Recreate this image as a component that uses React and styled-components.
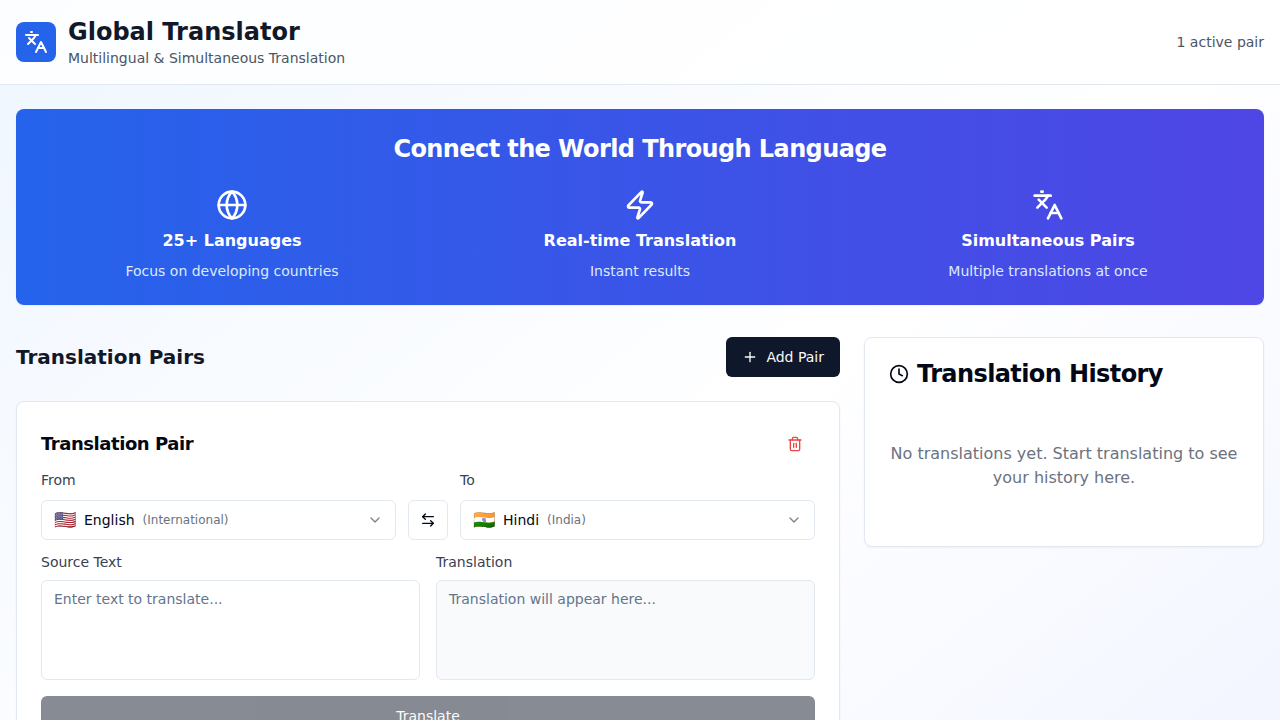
import React from "react";
import styled, { createGlobalStyle } from "styled-components";
import { Languages, Globe, Zap, Plus, Clock, Trash2, ArrowLeftRight, ChevronDown } from "lucide-react";

const GlobalStyle = createGlobalStyle`
  *, *::before, *::after { box-sizing: border-box; }
  html { font-family: "DejaVu Sans", sans-serif; line-height: 1.5; }
  body { margin: 0; height: 100vh; overflow: hidden; color: #020817; }
  h1, h2, h3, p { margin: 0; }
  button, textarea { font: inherit; }
  svg { display: block; flex-shrink: 0; }
`;

const Page = styled.div`
  min-height: 1000px;
  background: linear-gradient(to bottom right, #eff6ff, #ffffff, #eef2ff);
`;

const Header = styled.header`
  display: flex;
  align-items: center;
  justify-content: space-between;
  height: 85px;
  padding: 0 16px;
  background: rgba(255, 255, 255, 0.8);
  border-bottom: 1px solid #e2e8f0;
`;

const Brand = styled.div`
  display: flex;
  align-items: center;
  gap: 12px;
`;

const Logo = styled.div`
  display: grid;
  place-items: center;
  width: 40px;
  height: 40px;
  border-radius: 8px;
  color: #fff;
  background: #2563eb;
`;

const AppName = styled.h1`
  font-size: 24px;
  line-height: 32px;
  font-weight: 700;
  color: #111827;
`;

const Muted = styled.p`
  font-size: 14px;
  line-height: 20px;
  color: #4b5563;
`;

const Main = styled.main`
  padding: 24px 16px;
`;

const Hero = styled.section`
  height: 196px;
  padding: 24px;
  margin-bottom: 32px;
  border-radius: 8px;
  color: #fff;
  text-align: center;
  background: linear-gradient(to right, #2563eb, #4f46e5);
  box-shadow: 0 1px 2px rgba(0, 0, 0, 0.05);
`;

const HeroTitle = styled.h2`
  font-size: 24px;
  line-height: 32px;
  font-weight: 600;
  letter-spacing: -0.6px;
`;

const Features = styled.div`
  display: grid;
  grid-template-columns: repeat(3, 1fr);
  gap: 24px;
  margin-top: 24px;
`;

const Feature = styled.div`
  display: flex;
  flex-direction: column;
  align-items: center;
`;

const FeatureName = styled.h3`
  margin-top: 8px;
  font-size: 16px;
  line-height: 24px;
  font-weight: 600;
`;

const FeatureText = styled.p`
  margin-top: 8px;
  font-size: 14px;
  line-height: 20px;
  color: #dbeafe;
`;

const Columns = styled.div`
  display: grid;
  grid-template-columns: 824px 1fr;
  gap: 24px;
  align-items: start;
`;

const SectionHead = styled.div`
  display: flex;
  align-items: center;
  justify-content: space-between;
  margin-bottom: 24px;
`;

const SectionTitle = styled.h2`
  font-size: 20px;
  line-height: 28px;
  font-weight: 600;
  color: #111827;
`;

const AddButton = styled.button`
  display: flex;
  align-items: center;
  gap: 8px;
  height: 40px;
  padding: 0 16px;
  border: 0;
  border-radius: 6px;
  font-size: 14px;
  color: #f8fafc;
  background: #0f172a;
`;

const Card = styled.section`
  border: 1px solid #e2e8f0;
  border-radius: 8px;
  background: #fff;
  box-shadow: 0 1px 2px rgba(0, 0, 0, 0.05);
`;

const PairCard = styled(Card)`
  padding: 24px;
`;

const PairHead = styled.div`
  display: flex;
  align-items: center;
  justify-content: space-between;
  height: 36px;
  margin-bottom: 8px;
`;

const PairTitle = styled.h3`
  font-size: 18px;
  line-height: 28px;
  font-weight: 600;
  letter-spacing: -0.45px;
`;

const DeleteButton = styled.button`
  display: grid;
  place-items: center;
  width: 40px;
  height: 36px;
  padding: 0;
  border: 0;
  color: #ef4444;
  background: transparent;
`;

const LanguageRow = styled.div`
  display: grid;
  grid-template-columns: 1fr 40px 1fr;
  gap: 12px;
  align-items: end;
`;

const Label = styled.label`
  display: block;
  margin-bottom: ${({ $gap }) => $gap || 8}px;
  font-size: 14px;
  line-height: 20px;
  color: #374151;
`;

const Select = styled.div`
  display: flex;
  align-items: center;
  gap: 8px;
  height: 40px;
  padding: 0 12px;
  border: 1px solid #e2e8f0;
  border-radius: 6px;
  font-size: 14px;
  background: #fff;
  & > svg { margin-left: auto; opacity: 0.5; }
`;

const Flag = styled.span`
  font-size: 18px;
  line-height: 28px;
`;

const Region = styled.span`
  font-size: 12px;
  color: #6b7280;
`;

const SwapButton = styled.button`
  display: grid;
  place-items: center;
  height: 40px;
  padding: 0;
  border: 1px solid #e2e8f0;
  border-radius: 6px;
  color: #020817;
  background: #fff;
`;

const TextRow = styled.div`
  display: grid;
  grid-template-columns: 1fr 1fr;
  gap: 16px;
  margin-top: 12px;
`;

const TextBox = styled.textarea`
  display: block;
  width: 100%;
  height: 100px;
  padding: 8px 12px;
  border: 1px solid #e2e8f0;
  border-radius: 6px;
  font-size: 14px;
  line-height: 20px;
  resize: none;
  background: ${({ readOnly }) => (readOnly ? "#f9fafb" : "#fff")};
  &::placeholder { color: #64748b; opacity: 1; }
`;

const TranslateButton = styled.button`
  width: 100%;
  height: 40px;
  margin-top: 16px;
  border: 0;
  border-radius: 6px;
  font-size: 14px;
  color: #f8fafc;
  background: #0f172a;
  opacity: 0.5;
`;

const HistoryCard = styled(Card)`
  height: 210px;
  padding: 20px 24px;
`;

const HistoryTitle = styled.h2`
  display: flex;
  align-items: center;
  gap: 8px;
  font-size: 24px;
  line-height: 32px;
  font-weight: 600;
  letter-spacing: -0.6px;
`;

const EmptyText = styled.p`
  margin-top: 52px;
  font-size: 16px;
  line-height: 24px;
  text-align: center;
  color: #6b7280;
`;

const features = [
  { Icon: Globe, name: "25+ Languages", text: "Focus on developing countries" },
  { Icon: Zap, name: "Real-time Translation", text: "Instant results" },
  { Icon: Languages, name: "Simultaneous Pairs", text: "Multiple translations at once" },
];

function LanguageSelect({ label, flag, name, region }) {
  return (
    <div>
      <Label $gap={10}>{label}</Label>
      <Select>
        <Flag>{flag}</Flag>
        <span>{name}</span>
        <Region>({region})</Region>
        <ChevronDown size={16} />
      </Select>
    </div>
  );
}

export default function App() {
  return (
    <Page>
      <GlobalStyle />
      <Header>
        <Brand>
          <Logo><Languages size={24} /></Logo>
          <div>
            <AppName>Global Translator</AppName>
            <Muted>Multilingual &amp; Simultaneous Translation</Muted>
          </div>
        </Brand>
        <Muted>1 active pair</Muted>
      </Header>
      <Main>
        <Hero>
          <HeroTitle>Connect the World Through Language</HeroTitle>
          <Features>
            {features.map(({ Icon, name, text }) => (
              <Feature key={name}>
                <Icon size={32} />
                <FeatureName>{name}</FeatureName>
                <FeatureText>{text}</FeatureText>
              </Feature>
            ))}
          </Features>
        </Hero>
        <Columns>
          <div>
            <SectionHead>
              <SectionTitle>Translation Pairs</SectionTitle>
              <AddButton><Plus size={16} />Add Pair</AddButton>
            </SectionHead>
            <PairCard>
              <PairHead>
                <PairTitle>Translation Pair</PairTitle>
                <DeleteButton aria-label="Delete pair"><Trash2 size={16} /></DeleteButton>
              </PairHead>
              <LanguageRow>
                <LanguageSelect label="From" flag="🇺🇸" name="English" region="International" />
                <SwapButton aria-label="Swap languages"><ArrowLeftRight size={16} /></SwapButton>
                <LanguageSelect label="To" flag="🇮🇳" name="Hindi" region="India" />
              </LanguageRow>
              <TextRow>
                <div>
                  <Label>Source Text</Label>
                  <TextBox placeholder="Enter text to translate..." />
                </div>
                <div>
                  <Label>Translation</Label>
                  <TextBox readOnly placeholder="Translation will appear here..." />
                </div>
              </TextRow>
              <TranslateButton>Translate</TranslateButton>
            </PairCard>
          </div>
          <HistoryCard>
            <HistoryTitle><Clock size={20} />Translation History</HistoryTitle>
            <EmptyText>No translations yet. Start translating to see your history here.</EmptyText>
          </HistoryCard>
        </Columns>
      </Main>
    </Page>
  );
}
